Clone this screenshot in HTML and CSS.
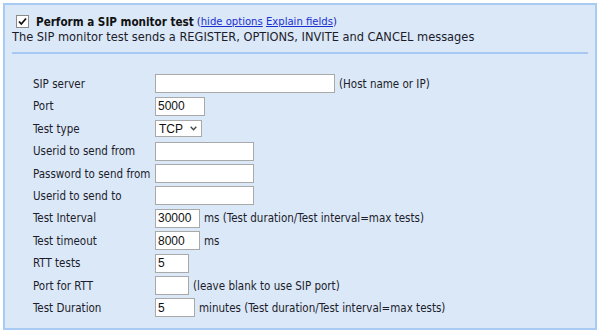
FILE: index.html
```html
<!DOCTYPE html>
<html>
<head>
    <meta charset="utf-8">
    <link rel="stylesheet" href="styles.css">
</head>
<body>
    <div class="panel">
        <div class="panel-head">
            <div class="title-line">
                <span class="checkbox">
                    <svg width="11" height="11" viewBox="0 0 11 11"><path d="M2 5.5 L4.3 8 L9 2.5" fill="none" stroke="#111" stroke-width="1.8"/></svg>
                </span>
                <span class="title">Perform a SIP monitor test</span>
                <span class="links">(<a href="#">hide options</a> <a href="#">Explain fields</a>)</span>
            </div>
            <p class="desc">The SIP monitor test sends a REGISTER, OPTIONS, INVITE and CANCEL messages</p>
        </div>

        <div class="form-grid">
            <span class="field-label">SIP server</span>
            <span class="field"><input class="text-input w-180" type="text" value=""><span class="hint">(Host name or IP)</span></span>

            <span class="field-label">Port</span>
            <span class="field"><input class="text-input w-50" type="text" value="5000"></span>

            <span class="field-label">Test type</span>
            <span class="field">
                <span class="select-box">TCP
                    <svg width="7" height="5" viewBox="0 0 7 5"><path d="M0.7 0.8 L3.5 3.8 L6.3 0.8" fill="none" stroke="#444" stroke-width="1.3"/></svg>
                </span>
            </span>

            <span class="field-label">Userid to send from</span>
            <span class="field"><input class="text-input w-99" type="text" value=""></span>

            <span class="field-label">Password to send from</span>
            <span class="field"><input class="text-input w-99" type="text" value=""></span>

            <span class="field-label">Userid to send to</span>
            <span class="field"><input class="text-input w-99" type="text" value=""></span>

            <span class="field-label">Test Interval</span>
            <span class="field"><input class="text-input w-45" type="text" value="30000"><span class="hint">ms (Test duration/Test interval=max tests)</span></span>

            <span class="field-label">Test timeout</span>
            <span class="field"><input class="text-input w-45" type="text" value="8000"><span class="hint">ms</span></span>

            <span class="field-label">RTT tests</span>
            <span class="field"><input class="text-input w-34" type="text" value="5"></span>

            <span class="field-label">Port for RTT</span>
            <span class="field"><input class="text-input w-34" type="text" value=""><span class="hint">(leave blank to use SIP port)</span></span>

            <span class="field-label">Test Duration</span>
            <span class="field"><input class="text-input w-40" type="text" value="5"><span class="hint">minutes (Test duration/Test interval=max tests)</span></span>
        </div>
    </div>
</body>
</html>
```

FILE: styles.css
```css
body {
    margin: 0;
    padding: 3px;
    background-color: #ffffff;
    font-family: "DejaVu Sans Condensed", "DejaVu Sans", Verdana, sans-serif;
    font-size: 11.5px;
    color: #1c1c2a;
}

.panel {
    width: 590px;
    height: 323px;
    background-color: #dbe8f8;
    border: 2px solid #a8cbf4;
    box-sizing: content-box;
}

.panel-head {
    margin: 0 7px;
    padding-top: 9px;
    padding-bottom: 8px;
    border-bottom: 2px solid #a6c8f2;
}

.title-line {
    display: flex;
    align-items: center;
    height: 15px;
}

.checkbox {
    display: inline-flex;
    align-items: center;
    justify-content: center;
    width: 11px;
    height: 11px;
    margin-left: 4px;
    margin-right: 7px;
    background: #ffffff;
    border: 1px solid #8a8a8a;
}

.title {
    font-size: 11.6px;
    font-weight: bold;
    color: #111;
}

.links {
    font-size: 11.2px;
    margin-left: 3px;
    color: #1a1aa0;
}

.links a {
    color: #1a2fd0;
}

.desc {
    margin: 0;
    font-size: 12.7px;
    line-height: 15px;
}

.form-grid {
    display: grid;
    grid-template-columns: 122px auto;
    grid-auto-rows: 22.4px;
    padding: 18.8px 0 0 28px;
}

.field-label {
    display: flex;
    align-items: center;
}

.field {
    display: flex;
    align-items: center;
}

.text-input {
    height: 19px;
    box-sizing: border-box;
    padding: 0 2px;
    border: 1px solid #a9a9a9;
    background: #ffffff;
    font-family: "Liberation Sans", Arial, sans-serif;
    font-size: 12px;
    color: #111;
    outline: none;
}

.w-180 { width: 180px; }
.w-99 { width: 99px; }
.w-50 { width: 50px; }
.w-45 { width: 45px; }
.w-40 { width: 40px; }
.w-34 { width: 34px; }

.hint {
    margin-left: 4px;
}

.select-box {
    display: inline-flex;
    align-items: center;
    justify-content: space-between;
    width: 47px;
    height: 17px;
    box-sizing: border-box;
    padding: 0 4px 0 3px;
    border: 1px solid #a9a9a9;
    background: #ffffff;
    font-family: "Liberation Sans", Arial, sans-serif;
    font-size: 12px;
    color: #111;
}
```
